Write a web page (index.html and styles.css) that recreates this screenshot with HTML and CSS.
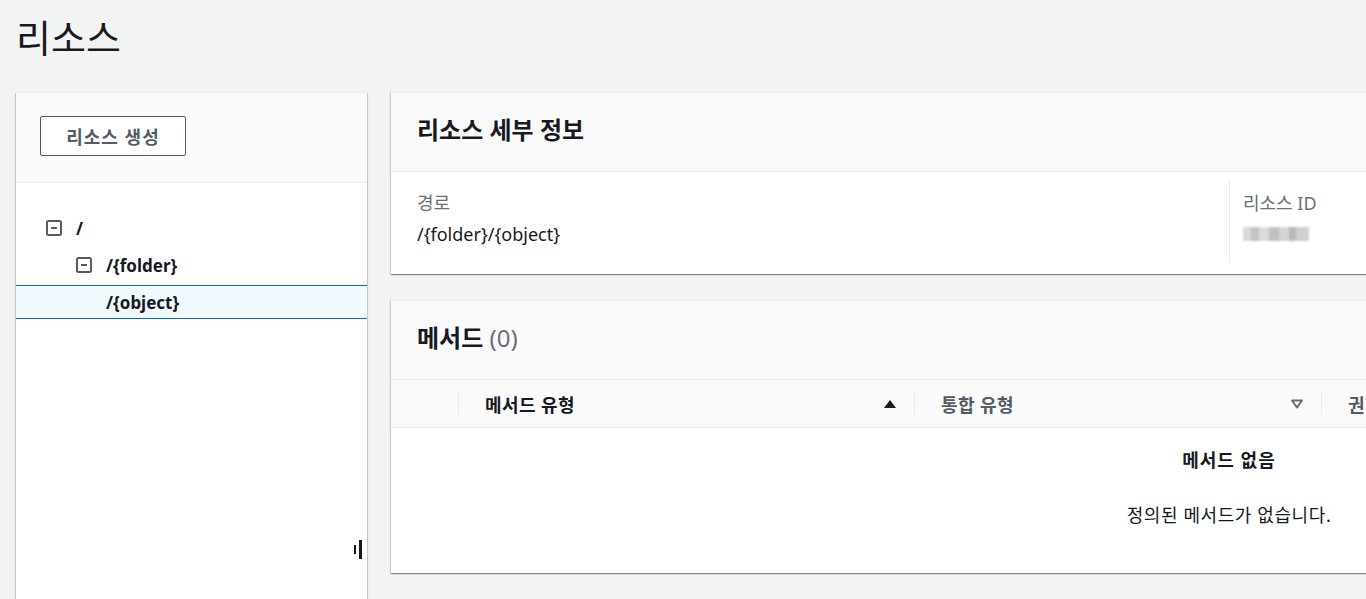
FILE: index.html
```html
<!DOCTYPE html>
<html lang="ko">
<head>
<meta charset="utf-8">
<title>리소스</title>
<link rel="stylesheet" href="styles.css">
</head>
<body>
<div class="page">
  <h1 class="page-title">리소스</h1>
  <div class="layout">
    <aside class="tree-panel">
      <div class="tree-head">
        <button class="btn" type="button">리소스 생성</button>
      </div>
      <ul class="tree">
        <li class="row lvl1">
          <svg class="toggle" width="16" height="16" viewBox="0 0 16 16"><rect x="1" y="1" width="14" height="14" rx="1.5" fill="none" stroke="#545b64" stroke-width="2"/><path d="M5 8h6" stroke="#545b64" stroke-width="2"/></svg>
          <span class="name">/</span>
        </li>
        <li class="row lvl2">
          <svg class="toggle" width="16" height="16" viewBox="0 0 16 16"><rect x="1" y="1" width="14" height="14" rx="1.5" fill="none" stroke="#545b64" stroke-width="2"/><path d="M5 8h6" stroke="#545b64" stroke-width="2"/></svg>
          <span class="name">/{folder}</span>
        </li>
        <li class="row lvl3 selected">
          <span class="name">/{object}</span>
        </li>
      </ul>
      <div class="resizer"><span class="bar short"></span><span class="bar long"></span></div>
    </aside>

    <main class="content">
      <section class="card">
        <header class="card-head"><h2 class="card-title">리소스 세부 정보</h2></header>
        <div class="details">
          <div class="col">
            <div class="label">경로</div>
            <div class="value">/{folder}/{object}</div>
          </div>
          <div class="col col-sep">
            <div class="label">리소스 ID</div>
            <div class="value"><span class="redacted"></span></div>
          </div>
        </div>
      </section>

      <section class="card">
        <header class="card-head"><h2 class="card-title">메서드 <span class="count">(0)</span></h2></header>
        <div class="thead">
          <div class="th th-select"></div>
          <div class="th th-col sorted">
            <span class="ko">메서드 유형</span>
            <svg class="sort" width="14" height="10" viewBox="0 0 14 10"><path d="M7 1L13 9H1Z" fill="#16191f"/></svg>
          </div>
          <div class="th th-col muted">
            <span class="ko">통합 유형</span>
            <svg class="sort" width="14" height="10" viewBox="0 0 14 10"><path d="M2 1.5h10L7 8.5Z" fill="none" stroke="#687078" stroke-width="2" stroke-linejoin="round"/></svg>
          </div>
          <div class="th th-col muted th-last"><span class="ko">권한 부여</span></div>
        </div>
        <div class="empty">
          <div class="empty-title">메서드 없음</div>
          <div class="empty-text">정의된 메서드가 없습니다.</div>
        </div>
      </section>
    </main>
  </div>
</div>
</body>
</html>
```

FILE: styles.css
```css
* { box-sizing: border-box; }

html, body {
  margin: 0;
  padding: 0;
  background: #f2f3f3;
  overflow: hidden;
}

body {
  font-family: "Noto Sans", "Noto Sans CJK KR", sans-serif;
  font-size: 18px;
  color: #16191f;
}

.page {
  padding-left: 16px;
  width: 2200px;
}

.page-title {
  margin: 16px 0 0;
  font-size: 38px;
  line-height: 42px;
  font-weight: 400;
  color: #16191f;
}

.layout {
  margin-top: 34px;
  display: flex;
  gap: 24px;
  align-items: flex-start;
}

/* left tree panel */
.tree-panel {
  position: relative;
  width: 351px;
  height: 560px;
  background: #fff;
  border-top: 1px solid #eaeded;
  box-shadow: 0 1px 1px 0 rgba(0,28,36,.3), 1px 1px 1px 0 rgba(0,28,36,.15), -1px 1px 1px 0 rgba(0,28,36,.15);
  flex: none;
}

.tree-head {
  background: #fafafa;
  border-bottom: 1px solid #eaeded;
  padding: 23px 24px 26px;
}

.btn {
  display: block;
  width: 146px;
  height: 40px;
  background: #fff;
  border: 1px solid #545b64;
  border-radius: 2px;
  font-family: inherit;
  font-size: 18px;
  font-weight: 700;
  letter-spacing: 1px;
  color: #545b64;
  padding: 0;
}

.tree {
  list-style: none;
  margin: 0;
  padding: 25px 0 0;
}

.row {
  display: flex;
  align-items: center;
  gap: 14px;
  height: 34px;
  margin-top: 3px;
  border-top: 1px solid transparent;
  border-bottom: 1px solid transparent;
  font-weight: 700;
  font-size: 17px;
}

.lvl1 { padding-left: 30px; }
.lvl2 { padding-left: 60px; }
.lvl3 { padding-left: 90px; }

.row.selected {
  background: #f1faff;
  border-top-color: #0073bb;
  border-bottom-color: #0073bb;
}

.toggle { flex: none; display: block; }

.resizer {
  position: absolute;
  left: 338px;
  top: 447px;
  display: flex;
  align-items: center;
  gap: 3px;
}

.bar { display: block; background: #16191f; }
.bar.short { width: 2px; height: 9px; }
.bar.long { width: 3px; height: 19px; }

/* right content */
.content {
  width: 1676px;
  flex: none;
  display: flex;
  flex-direction: column;
  gap: 26px;
}

.card {
  background: #fff;
  border-top: 1px solid #eaeded;
  box-shadow: 0 1px 1px 0 rgba(0,28,36,.3), 1px 1px 1px 0 rgba(0,28,36,.15), -1px 1px 1px 0 rgba(0,28,36,.15);
}

.card-head {
  height: 79px;
  background: #fafafa;
  border-bottom: 1px solid #eaeded;
  padding: 0 26px 5px;
  display: flex;
  align-items: center;
}

.card-title {
  margin: 0;
  font-size: 24px;
  font-weight: 700;
  line-height: 32px;
}

.count {
  font-weight: 400;
  color: #687078;
}

.details {
  display: grid;
  grid-template-columns: 1fr 1fr;
  padding: 8px 0 12px;
}

.col {
  padding: 12px 26px 17px;
}

.col-sep {
  border-left: 1px solid #eaeded;
  padding-left: 13px;
}

.label {
  line-height: 22px;
  color: #687078;
}

.value {
  margin-top: 9px;
  line-height: 22px;
  height: 22px;
}

.redacted {
  display: inline-block;
  width: 66px;
  height: 14px;
  margin-top: 4px;
  background:
    linear-gradient(90deg, #d8d8d8 0 12%, #c4c4c4 12% 25%, #dcdcdc 25% 40%, #c0c0c0 40% 55%, #d4d4d4 55% 70%, #b8b8b8 70% 80%, #d0d0d0 80% 100%);
  filter: blur(1px);
}

.thead {
  display: flex;
  height: 48px;
  background: #fafafa;
  border-bottom: 1px solid #eaeded;
  align-items: center;
}

.th-select { width: 67px; flex: none; }

.th-col {
  position: relative;
  display: flex;
  align-items: center;
  justify-content: space-between;
  height: 100%;
  padding: 0 17px 0 26px;
  border-left: 1px solid transparent;
  font-weight: 700;
  font-size: 18px;
}

.th-col .ko { letter-spacing: 0.4px; }

.th-col::before {
  content: "";
  position: absolute;
  left: -1px;
  top: 11px;
  height: 24px;
  width: 1px;
  background: #eaeded;
}

.sorted { width: 456px; }
.muted { width: 407px; color: #545b64; }
.th-last { width: 300px; }

.sort { display: block; flex: none; }

.empty {
  text-align: center;
  padding: 21px 0 47px;
}

.empty-title {
  font-weight: 700;
  line-height: 22px;
  letter-spacing: 1px;
}

.empty-text {
  margin-top: 33px;
  line-height: 22px;
  letter-spacing: 0.6px;
}
```
